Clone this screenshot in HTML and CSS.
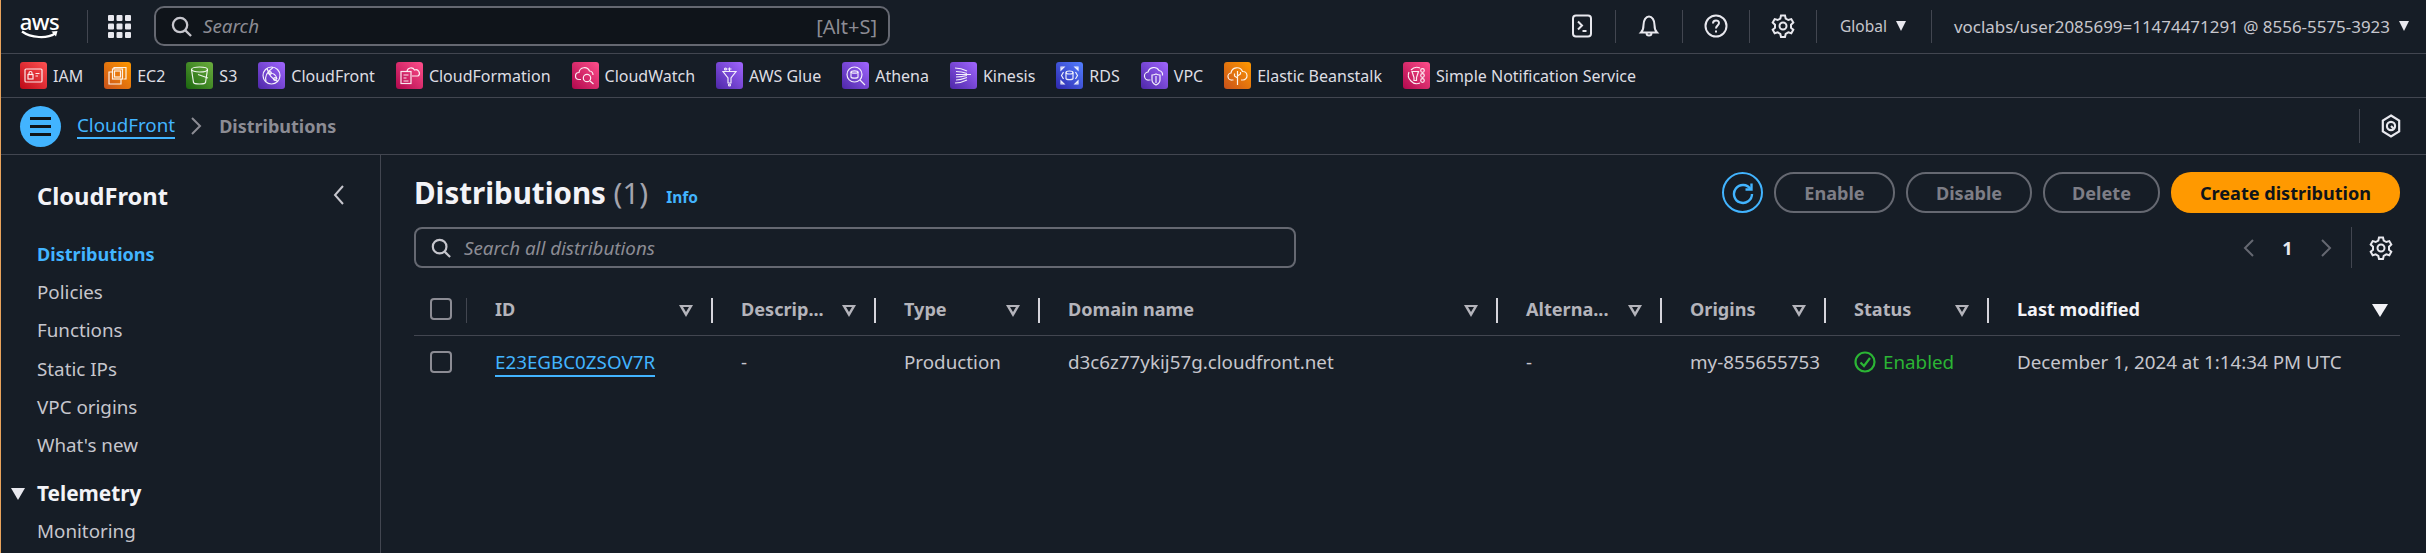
FILE: index.html
```html
<!DOCTYPE html>
<html lang="en">
<head>
    <meta charset="UTF-8">
    <meta name="viewport" content="width=device-width, initial-scale=1.0">
    <title>Distributions | CloudFront</title>
    <link rel="stylesheet" href="styles.css">
</head>
<body>
    <header class="topbar">
        <div class="aws-logo">
            <span class="aws-word">aws</span>
            <svg class="aws-smile" viewBox="0 0 38 10"><path d="M1 1.500C10 8 26 9 34 3.500" fill="none" stroke="#fff" stroke-width="2.200"/><path d="M30.500 1.500L36.500 1 35 6.500" fill="#fff"/></svg>
        </div>
        <span class="top-sep logo-sep"></span>
        <svg class="grid-icon" viewBox="0 0 23 23" fill="#e8e8ee"><rect x="0" y="0" width="6" height="6" rx="1"/><rect x="8.500" y="0" width="6" height="6" rx="1"/><rect x="17" y="0" width="6" height="6" rx="1"/><rect x="0" y="8.500" width="6" height="6" rx="1"/><rect x="8.500" y="8.500" width="6" height="6" rx="1"/><rect x="17" y="8.500" width="6" height="6" rx="1"/><rect x="0" y="17" width="6" height="6" rx="1"/><rect x="8.500" y="17" width="6" height="6" rx="1"/><rect x="17" y="17" width="6" height="6" rx="1"/></svg>
        <div class="top-search">
            <svg class="search-icon" viewBox="0 0 22 22"><circle cx="9.500" cy="9.500" r="7.500"/><path d="M15 15l6 6"/></svg>
            <span class="top-search-text">Search</span>
            <span class="top-search-key">[Alt+S]</span>
        </div>
        <div class="top-right">
            <svg class="top-icon" viewBox="0 0 24 24"><rect x="3" y="1.500" width="18" height="21" rx="3"/><path d="M8 7.500l4 4-4 4M12.500 17h4"/></svg>
            <span class="top-sep"></span>
            <svg class="top-icon" viewBox="0 0 24 24"><path d="M4 18.500c2-2 2.500-3 2.500-7.500 0-5 2.500-8.500 5.500-8.500s5.500 3.500 5.500 8.500c0 4.500.5 5.500 2.500 7.500zM9.500 19a2.500 2.500 0 0 0 5 0"/></svg>
            <span class="top-sep"></span>
            <svg class="top-icon" viewBox="0 0 24 24"><circle cx="12" cy="12" r="10.500"/><path d="M9 9.500c0-4 6-4 6-.5 0 2.500-3 2.500-3 5.500M12 16.500v2"/></svg>
            <span class="top-sep"></span>
            <svg class="top-icon" viewBox="0 0 24 24"><path d="M10 1.500h4l.7 3 2.600 1.500 3-.9 2 3.500-2.300 2.100v3l2.300 2.100-2 3.500-3-.9-2.600 1.500-.7 3h-4l-.7-3-2.600-1.500-3 .9-2-3.500 2.300-2.100v-3L1.700 8.600l2-3.500 3 .9L9.300 4.500z"/><circle cx="12" cy="12" r="3.500"/></svg>
            <span class="top-sep"></span>
            <span class="top-menu region">Global<i class="caret"></i></span>
            <span class="top-sep"></span>
            <span class="top-menu account">voclabs/user2085699=11474471291 @ 8556-5575-3923<i class="caret"></i></span>
        </div>
    </header>

    <nav class="services">
        <a class="service"><svg class="svc red" viewBox="0 0 27 27"><rect x="5" y="7" width="17" height="13" rx="1"/><rect x="8" y="12.500" width="5" height="4.500"/><path d="M9 12.500v-1.500a1.500 1.500 0 0 1 3 0v1.500M15.500 11.500h4M15.500 14h2.500"/></svg>IAM</a>
        <a class="service"><svg class="svc orange" viewBox="0 0 27 27"><path d="M10 8V5.500h12V17h-2.500M17 10H5v12h12z"/><rect x="8.500" y="7" width="10" height="10" fill="#e8770f"/><rect x="10.500" y="9" width="6" height="6"/></svg>EC2</a>
        <a class="service"><svg class="svc green" viewBox="0 0 27 27"><ellipse cx="13.500" cy="7.500" rx="8" ry="2.500"/><path d="M5.500 7.500l2 13c.5 2 11.500 2 12 0l2-13M12 12.500l10 3.500"/></svg>S3</a>
        <a class="service"><svg class="svc purple" viewBox="0 0 27 27"><circle cx="13.500" cy="13.500" r="8.500"/><path d="M9 6.500c2 6 4 10 11 13M8 19.500c-2-6 3-11 7-14M12 11c3 0 6 2 7 6"/><circle cx="12" cy="11" r="1.300"/><circle cx="17" cy="17" r="1.300"/></svg>CloudFront</a>
        <a class="service"><svg class="svc pink" viewBox="0 0 27 27"><path d="M11 9.500a4 4 0 0 1 7.500-1.500 3.500 3.500 0 0 1 3.500 6h-6"/><rect x="5" y="9.500" width="10" height="12"/><path d="M7.500 13h5M7.500 16h3M7.500 19h5"/></svg>CloudFormation</a>
        <a class="service"><svg class="svc pink" viewBox="0 0 27 27"><path d="M9 17.500H7a3.500 3.500 0 0 1 0-7 5.500 5.500 0 0 1 10.500-1.500 4 4 0 0 1 3.500 4"/><circle cx="15" cy="16" r="3.700"/><path d="M18 19l3.500 3"/></svg>CloudWatch</a>
        <a class="service"><svg class="svc purple" viewBox="0 0 27 27"><path d="M7 9.500h13l-5 6.500v5h-3v-5zM13.500 9.500V5.500M11.500 7h4"/><circle cx="9.500" cy="7" r="1"/><circle cx="13.500" cy="23" r="1"/></svg>AWS Glue</a>
        <a class="service"><svg class="svc purple" viewBox="0 0 27 27"><circle cx="12.500" cy="12.500" r="7.500"/><ellipse cx="12.500" cy="10" rx="3.500" ry="1.200"/><path d="M9 10v5c.5 1.500 6.500 1.500 7 0v-5M18 18l5 5"/></svg>Athena</a>
        <a class="service"><svg class="svc purple" viewBox="0 0 27 27"><path d="M5 6c5 0 8 1 12 3M6 9.500c4 0 7 .5 11 2M6 12.500h15M6 15c4 0 7-.5 11-1.500M6 18c4 0 7-1 11-2.500M5 21c5 0 8-1 12-3"/></svg>Kinesis</a>
        <a class="service"><svg class="svc blue" viewBox="0 0 27 27"><ellipse cx="13.500" cy="10.500" rx="3.500" ry="1.500"/><path d="M10 10.500v6c.5 1.500 6.500 1.500 7 0v-6M7.500 10l-2 3.500 2 3.500M19.500 10l2 3.500-2 3.500M5 5h3L5 8zM22 5h-3l3 3zM5 22h3l-3-3zM22 22h-3l3-3z"/></svg>RDS</a>
        <a class="service"><svg class="svc purple" viewBox="0 0 27 27"><path d="M9.500 18H8a4 4 0 0 1-1-8 6 6 0 0 1 11-1.500 4.500 4.500 0 0 1 3.500 5"/><path d="M11 13c2 0 3-.5 4-1 1 .5 2 1 4 1v5c0 2.500-2 4-4 5-2-1-4-2.500-4-5z"/><path d="M15 14v7"/></svg>VPC</a>
        <a class="service"><svg class="svc amber" viewBox="0 0 27 27"><path d="M9.500 18H8a3.500 3.500 0 0 1-1-7 6 6 0 0 1 11.500-1.500 4 4 0 0 1 .5 8.500h-2"/><path d="M13.500 9v14M13.500 16l-3-2v-2.500M13.500 14l3-2v-2"/></svg>Elastic Beanstalk</a>
        <a class="service"><svg class="svc pink" viewBox="0 0 27 27"><path d="M8 8a8 8 0 0 1 9-2M8 19a8 8 0 0 1-2-9M17 21a8 8 0 0 1-9-2"/><path d="M9 9.500h6.500l-2 6v3h-2.500v-3z"/><circle cx="19.500" cy="8.500" r="1.800"/><circle cx="19.500" cy="13.500" r="1.800"/><circle cx="19.500" cy="18.500" r="1.800"/></svg>Simple Notification Service</a>
    </nav>

    <div class="crumbbar">
        <button class="menu-btn"><span></span><span></span><span></span></button>
        <a class="crumb-link">CloudFront</a>
        <svg class="crumb-chevron" viewBox="0 0 12 20"><path d="M2 2l8 8-8 8"/></svg>
        <span class="crumb-current">Distributions</span>
        <div class="crumb-right">
            <svg class="hex-icon" viewBox="0 0 22 26"><path d="M11 1.500l9 5.500v12l-9 5.500L2 19V7z"/><circle cx="11" cy="13" r="4.500"/><path d="M11 13l3 3"/></svg>
        </div>
    </div>

    <div class="layout">
        <aside class="sidebar">
            <div class="side-head">
                <span class="side-title">CloudFront</span>
                <svg class="side-close" viewBox="0 0 12 22"><path d="M10 2L2 11l8 9"/></svg>
            </div>
            <ul class="side-nav">
                <li class="active">Distributions</li>
                <li>Policies</li>
                <li>Functions</li>
                <li>Static IPs</li>
                <li>VPC origins</li>
                <li>What's new</li>
            </ul>
            <div class="side-group"><i class="side-caret"></i>Telemetry</div>
            <ul class="side-nav sub">
                <li>Monitoring</li>
            </ul>
        </aside>

        <main class="content">
            <div class="page-head">
                <h1>Distributions <span class="count">(1)</span></h1>
                <a class="info">Info</a>
                <div class="actions">
                    <button class="refresh">
                        <svg viewBox="0 0 24 24"><path d="M19.500 8A9 9 0 1 0 21 13"/><path d="M20.500 2.500V8.500H14.500"/></svg>
                    </button>
                    <button class="btn btn-enable">Enable</button>
                    <button class="btn btn-disable">Disable</button>
                    <button class="btn btn-delete">Delete</button>
                    <button class="btn-primary">Create distribution</button>
                </div>
            </div>

            <div class="tools">
                <div class="table-search">
                    <svg class="search-icon small" viewBox="0 0 22 22"><circle cx="9.500" cy="9.500" r="7.500"/><path d="M15 15l6 6"/></svg>
                    <span>Search all distributions</span>
                </div>
                <div class="pager">
                    <svg class="pager-arrow" viewBox="0 0 12 20"><path d="M10 2l-8 8 8 8"/></svg>
                    <span class="pager-num">1</span>
                    <svg class="pager-arrow" viewBox="0 0 12 20"><path d="M2 2l8 8-8 8"/></svg>
                    <span class="pager-sep"></span>
                    <svg class="pager-gear" viewBox="0 0 24 24"><path d="M10 1.500h4l.7 3 2.600 1.500 3-.9 2 3.500-2.300 2.100v3l2.300 2.100-2 3.500-3-.9-2.600 1.500-.7 3h-4l-.7-3-2.600-1.500-3 .9-2-3.500 2.300-2.100v-3L1.700 8.600l2-3.500 3 .9L9.300 4.500z"/><circle cx="12" cy="12" r="3.500"/></svg>
                </div>
            </div>

            <div class="table">
                <div class="thead">
                    <div class="th th-check"><span class="checkbox"></span></div>
                    <div class="th"><span>ID</span><i class="filter"></i></div>
                    <div class="th"><span>Descrip...</span><i class="filter"></i></div>
                    <div class="th"><span>Type</span><i class="filter"></i></div>
                    <div class="th"><span>Domain name</span><i class="filter"></i></div>
                    <div class="th"><span>Alterna...</span><i class="filter"></i></div>
                    <div class="th"><span>Origins</span><i class="filter"></i></div>
                    <div class="th"><span>Status</span><i class="filter"></i></div>
                    <div class="th sorted"><span>Last modified</span><i class="sort"></i></div>
                </div>
                <div class="trow">
                    <div class="td td-check"><span class="checkbox"></span></div>
                    <div class="td"><a class="id-link">E23EGBC0ZSOV7R</a></div>
                    <div class="td">-</div>
                    <div class="td">Production</div>
                    <div class="td">d3c6z77ykij57g.cloudfront.net</div>
                    <div class="td">-</div>
                    <div class="td">my-855655753</div>
                    <div class="td status">
                        <svg viewBox="0 0 22 22"><circle cx="11" cy="11" r="9.500"/><path d="M6.500 11.500l3.500 3.500 6-8"/></svg>
                        Enabled
                    </div>
                    <div class="td">December 1, 2024 at 1:14:34 PM UTC</div>
                </div>
            </div>
        </main>
    </div>
</body>
</html>
```

FILE: styles.css
```css
* {
    box-sizing: border-box;
}
html, body {
    height: 100%;
    margin: 0;
    overflow: hidden;
}
body {
    background: #161d26;
    border-left: 1px solid #e8a35c;
    color: #c6c6cd;
    font-family: "Noto Sans", sans-serif;
    font-size: 18.800px;
}
button {
    font-family: inherit;
}

/* top bar */
.topbar {
    height: 54px;
    display: flex;
    align-items: center;
    border-bottom: 1px solid #424650;
    padding-bottom: 1px;
}
.aws-logo {
    width: 37px;
    margin-left: 20px;
    height: 28px;
    display: flex;
    flex-direction: column;
    align-items: center;
}
.aws-word {
    color: #fff;
    font-size: 22px;
    line-height: 18px;
    font-weight: 500;
    letter-spacing: -0.5px;
}
.aws-smile {
    width: 38px;
    height: 10px;
}
.top-sep {
    width: 1px;
    height: 33px;
    background: #424650;
}
.logo-sep {
    margin-left: 29px;
}
.grid-icon {
    width: 23px;
    height: 23px;
    margin-left: 20px;
}
.top-search {
    width: 736px;
    height: 40px;
    margin-left: 23px;
    display: flex;
    align-items: center;
    background: #0f141a;
    border: 2px solid #656871;
    border-radius: 10px;
    padding: 0 11px 0 15px;
}
.search-icon {
    width: 21px;
    height: 21px;
    fill: none;
    stroke: #c6c6cd;
    stroke-width: 2.400;
}
.top-search-text {
    margin-left: 11px;
    font-style: italic;
    color: #8c8c94;
}
.top-search-key {
    margin-left: auto;
    font-size: 20px;
    color: #8c8c94;
}
.top-right {
    margin-left: auto;
    display: flex;
    align-items: center;
    height: 100%;
    padding-right: 17px;
}
.top-icon {
    width: 24px;
    height: 24px;
    margin: 0 21px;
    fill: none;
    stroke: #e8e8ee;
    stroke-width: 2;
}
.top-menu {
    display: flex;
    align-items: center;
    color: #c6c6cd;
    white-space: nowrap;
}
.region {
    font-size: 15.500px;
    padding: 0 25px 0 23px;
}
.account {
    font-size: 16.950px;
    padding-left: 22px;
}
.caret {
    width: 0;
    height: 0;
    margin-left: 9px;
    border-left: 5.500px solid transparent;
    border-right: 5.500px solid transparent;
    border-top: 10px solid #e8e8ee;
}

/* favorites */
.services {
    height: 44px;
    display: flex;
    align-items: center;
    gap: 21px;
    padding-left: 19px;
    border-bottom: 1px solid #424650;
    font-size: 16px;
    color: #dedee3;
}
.service {
    display: flex;
    align-items: center;
    gap: 6px;
    white-space: nowrap;
}
.svc {
    width: 27px;
    height: 27px;
    border-radius: 3px;
    fill: none;
    stroke: #fff;
    stroke-opacity: 0.9;
    stroke-width: 1.200;
}
.red { background: linear-gradient(45deg, #bd0816, #ff5252); }
.orange { background: linear-gradient(45deg, #c8511b, #ff9900); }
.green { background: linear-gradient(45deg, #1b660f, #6cae3e); }
.purple { background: linear-gradient(45deg, #4d27a8, #a166ff); }
.pink { background: linear-gradient(45deg, #b0084d, #ff4f8b); }
.blue { background: linear-gradient(45deg, #2e27ad, #527fff); }
.amber { background: linear-gradient(45deg, #c8511b, #ff9900); }

/* breadcrumb row */
.crumbbar {
    height: 57px;
    display: flex;
    align-items: center;
    padding-left: 19px;
    border-bottom: 1px solid #424650;
}
.menu-btn {
    width: 41px;
    height: 41px;
    border: none;
    border-radius: 50%;
    background: #42b4ff;
    display: flex;
    flex-direction: column;
    align-items: center;
    justify-content: center;
    gap: 5px;
    padding: 0;
}
.menu-btn span {
    width: 21px;
    height: 3px;
    background: #0f141a;
}
.crumb-link {
    margin-left: 16px;
    color: #42b4ff;
    border-bottom: 2px solid #42b4ff;
    line-height: 24px;
}
.crumb-chevron {
    width: 12px;
    height: 20px;
    margin-left: 15px;
    fill: none;
    stroke: #8c8c94;
    stroke-width: 2;
}
.crumb-current {
    margin-left: 17px;
    font-size: 18px;
    font-weight: 700;
    color: #8c8c94;
}
.crumb-right {
    margin-left: auto;
    width: 67px;
    height: 34px;
    padding-right: 5px;
    border-left: 1px solid #424650;
    display: flex;
    align-items: center;
    justify-content: center;
}
.hex-icon {
    width: 20px;
    height: 24px;
    fill: none;
    stroke: #e8e8ee;
    stroke-width: 2.400;
}

/* page */
.layout {
    display: flex;
    height: 400px;
}
.sidebar {
    width: 380px;
    flex-shrink: 0;
    border-right: 1px solid #424650;
    padding-left: 36px;
    padding-right: 35px;
}
.side-head {
    display: flex;
    align-items: center;
    justify-content: space-between;
    height: 44px;
    margin-top: 19px;
}
.side-title {
    color: #f3f3f7;
    font-size: 23.700px;
    font-weight: 700;
}
.side-close {
    width: 12px;
    height: 22px;
    fill: none;
    stroke: #c6c6cd;
    stroke-width: 2;
    margin-top: -2px;
}
.side-nav {
    list-style: none;
    margin: 17px 0 0;
    padding: 0;
}
.side-nav li {
    height: 38.200px;
    line-height: 38.200px;
    color: #c6c6cd;
}
.side-nav li.active {
    color: #42b4ff;
    font-size: 18.100px;
    font-weight: 700;
}
.side-group {
    position: relative;
    margin-top: 10px;
    height: 38px;
    line-height: 38px;
    color: #f3f3f7;
    font-size: 20.800px;
    font-weight: 700;
}
.side-caret {
    position: absolute;
    left: -26px;
    top: 14px;
    width: 0;
    height: 0;
    border-left: 7px solid transparent;
    border-right: 7px solid transparent;
    border-top: 12px solid #e8e8ee;
}
.sub {
    margin-top: 0;
}
.content {
    flex: 1;
    padding: 17px 26px 0 33px;
}
.page-head {
    display: flex;
    align-items: center;
    height: 41px;
}
h1 {
    margin: 0;
    color: #f3f3f7;
    font-size: 29.500px;
    font-weight: 700;
    line-height: 41px;
}
.count {
    color: #a4a4ad;
    font-weight: 400;
}
.info {
    margin: 8px 0 0 18px;
    color: #42b4ff;
    font-size: 15.500px;
    font-weight: 700;
}
.actions {
    margin-left: auto;
    display: flex;
    align-items: center;
    gap: 11px;
}
.refresh {
    width: 41px;
    height: 41px;
    border: 2px solid #42b4ff;
    border-radius: 50%;
    background: none;
    padding: 0;
    display: flex;
    align-items: center;
    justify-content: center;
}
.refresh svg {
    width: 24px;
    height: 24px;
    fill: none;
    stroke: #42b4ff;
    stroke-width: 2.400;
}
.btn {
    height: 41px;
    border: 2px solid #656871;
    border-radius: 20px;
    background: none;
    color: #7e7e86;
    font-size: 18.100px;
    font-weight: 700;
    padding: 0;
}
.btn-enable { width: 121px; }
.btn-disable { width: 126px; }
.btn-delete { width: 117px; }
.btn-primary {
    width: 229px;
    height: 41px;
    border: none;
    border-radius: 20px;
    background: #ff9900;
    color: #0f141a;
    font-size: 18.100px;
    font-weight: 700;
    padding: 0;
}
.tools {
    display: flex;
    align-items: center;
    justify-content: space-between;
    margin-top: 14px;
    height: 41px;
}
.table-search {
    width: 882px;
    height: 41px;
    display: flex;
    align-items: center;
    border: 2px solid #656871;
    border-radius: 8px;
    padding-left: 15px;
    font-style: italic;
    color: #8c8c94;
}
.search-icon.small {
    width: 20px;
    height: 20px;
    margin-right: 13px;
}
.pager {
    display: flex;
    align-items: center;
    height: 41px;
}
.pager-arrow {
    width: 12px;
    height: 20px;
    fill: none;
    stroke: #656871;
    stroke-width: 2;
}
.pager-num {
    width: 65px;
    text-align: center;
    font-size: 18.100px;
    font-weight: 700;
    color: #e8e8ee;
}
.pager-sep {
    width: 1px;
    height: 41px;
    margin: 0 17px 0 19px;
    background: #424650;
}
.pager-gear {
    width: 24px;
    height: 24px;
    margin-right: 7px;
    fill: none;
    stroke: #e8e8ee;
    stroke-width: 2;
}

/* table */
.table {
    margin-top: 30px;
}
.thead, .trow {
    display: grid;
    grid-template-columns: 53px 246px 163px 164px 458px 164px 164px 163px 410px;
}
.thead {
    height: 38px;
    border-bottom: 1px solid #424650;
}
.th {
    height: 25px;
    display: flex;
    align-items: center;
    justify-content: space-between;
    padding: 0 18px 0 28px;
    border-right: 2px solid #d5d5db;
    color: #b4b4bb;
    font-size: 18.100px;
    font-weight: 700;
}
.th span {
    margin-top: -3px;
}
.th-check {
    padding: 0 0 0 16px;
    align-items: flex-start;
    border-right: 1px solid #424650;
}
.th .checkbox {
    margin-top: 0;
}
.th.sorted {
    border-right: none;
    color: #f3f3f7;
    padding-right: 11px;
}
.checkbox {
    display: block;
    width: 22px;
    height: 22px;
    border: 2.500px solid #8c8c94;
    border-radius: 4px;
}
.filter {
    width: 0;
    height: 0;
    border-left: 7px solid transparent;
    border-right: 7px solid transparent;
    border-top: 12px solid #b4b4bb;
    position: relative;
}
.filter::after {
    content: "";
    position: absolute;
    left: -3px;
    top: -10px;
    border-left: 3px solid transparent;
    border-right: 3px solid transparent;
    border-top: 5.500px solid #161d26;
}
.sort {
    width: 0;
    height: 0;
    border-left: 8px solid transparent;
    border-right: 8px solid transparent;
    border-top: 13px solid #f3f3f7;
}
.trow {
    height: 52px;
    align-items: center;
}
.td {
    padding-left: 28px;
    color: #c6c6cd;
    white-space: nowrap;
}
.td-check {
    padding-left: 16px;
    padding-bottom: 1px;
}
.id-link {
    color: #42b4ff;
    border-bottom: 2px solid #42b4ff;
}
.status {
    display: flex;
    align-items: center;
    gap: 7px;
    color: #2bb534;
}
.status svg {
    width: 22px;
    height: 22px;
    fill: none;
    stroke: #2bb534;
    stroke-width: 2.200;
}
```
